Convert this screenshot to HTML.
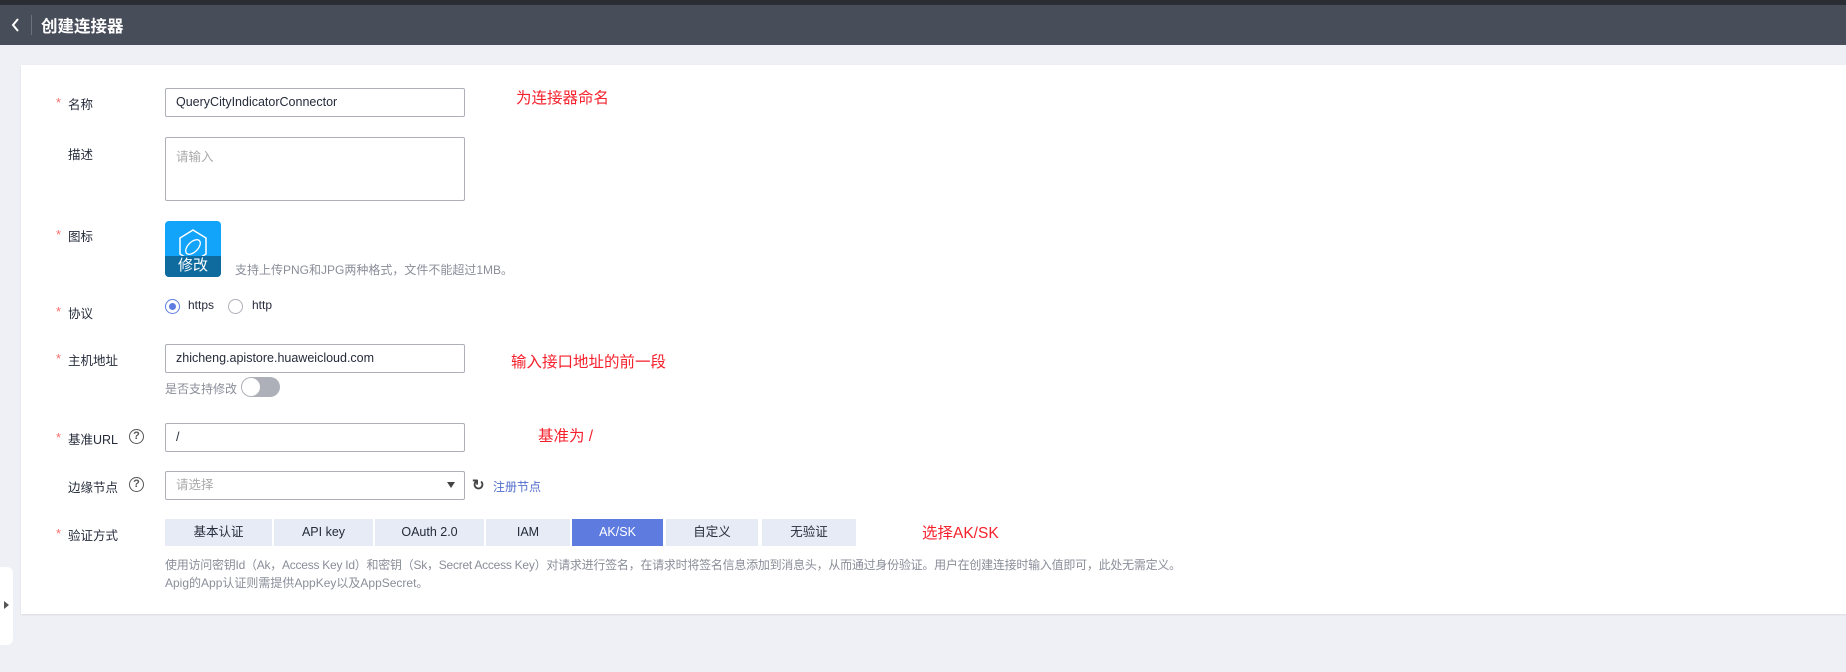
<!DOCTYPE html>
<html><head><meta charset="utf-8"><style>
*{box-sizing:border-box;margin:0;padding:0}
body{width:1846px;height:672px;background:#eef0f5;font-family:"Liberation Sans","Noto Sans CJK SC",sans-serif;font-size:12px;color:#252b3a;position:relative;overflow:hidden}
.abs{position:absolute}
.top{left:0;top:0;width:1846px;height:5px;background:#2a2d34}
.hdr{left:0;top:5px;width:1846px;height:40px;background:#484d5a}
.card{left:21px;top:65px;width:1830px;height:549px;background:#fff;box-shadow:0 1px 2px rgba(0,0,0,.08)}
.lab{left:68px;color:#252b3a;font-size:12.5px}
.star{left:56px;color:#f66f6a;font-size:13px}
.inp{left:165px;width:300px;border:1px solid #adb0b8;background:#fff;border-radius:2px;padding-left:10px;font-size:12.5px}
.red{color:#f5222d;font-size:15.5px}
.q{width:15px;height:15px;border:1.5px solid #555;border-radius:50%;font-size:11px;text-align:center;line-height:12px;color:#555;font-weight:bold}
.seg{top:519px;height:27px;background:#e6ebf5;text-align:center;line-height:27px;font-size:12.5px;color:#252b3a}
.gray{color:#8a8e99;font-size:12px}
</style></head><body>
<div class="abs top"></div>
<div class="abs hdr">
 <svg class="abs" style="left:10px;top:12px" width="12" height="16"><path d="M8 2 L3 8 L8 14" stroke="#fff" stroke-width="2" fill="none"/></svg>
 <div class="abs" style="left:31px;top:10px;width:1px;height:20px;background:#6c717d"></div>
 <div class="abs" style="left:41px;top:8px;color:#fff;font-size:16.5px;font-weight:bold">创建连接器</div>
</div>
<div class="abs" style="left:0;top:567px;width:13px;height:78px;background:#fff;border-radius:0 6px 6px 0"></div>
<div class="abs" style="left:4px;top:601px;width:0;height:0;border-left:5px solid #555;border-top:4px solid transparent;border-bottom:4px solid transparent"></div>
<div class="abs card"></div>

<div class="abs star" style="top:95px">*</div><div class="abs lab" style="top:94px">名称</div>
<div class="abs inp" style="top:88px;height:29px;line-height:27px">QueryCityIndicatorConnector</div>
<div class="abs red" style="left:516px;top:86px">为连接器命名</div>

<div class="abs lab" style="top:144px">描述</div>
<div class="abs inp" style="top:137px;height:64px;padding-top:8px;color:#aaa">请输入</div>

<div class="abs star" style="top:227px">*</div><div class="abs lab" style="top:226px">图标</div>
<div class="abs" style="left:165px;top:221px;width:56px;height:56px;border-radius:4px;background:#12a4fa;overflow:hidden">
 <svg class="abs" style="left:10px;top:6px" width="36" height="40"><path d="M18 3 L31 11 L31 27 L18 35 L5 27 L5 11 Z" fill="none" stroke="#fff" stroke-width="1.5"/><ellipse cx="18" cy="20" rx="9" ry="5" transform="rotate(-45 18 20)" fill="none" stroke="#fff" stroke-width="1.3"/></svg>
 <div class="abs" style="left:0;top:35px;width:56px;height:21px;background:#0f6a9e;color:#fff;text-align:center;font-size:15px;line-height:20px">修改</div>
</div>
<div class="abs gray" style="left:235px;top:261px">支持上传PNG和JPG两种格式，文件不能超过1MB。</div>

<div class="abs star" style="top:304px">*</div><div class="abs lab" style="top:303px">协议</div>
<div class="abs" style="left:165px;top:299px;width:15px;height:15px;border:1px solid #5e7ce0;border-radius:50%"><div class="abs" style="left:3px;top:3px;width:7px;height:7px;border-radius:50%;background:#5e7ce0"></div></div>
<div class="abs" style="left:188px;top:298px">https</div>
<div class="abs" style="left:228px;top:299px;width:15px;height:15px;border:1px solid #adb0b8;border-radius:50%"></div>
<div class="abs" style="left:252px;top:298px">http</div>

<div class="abs star" style="top:351px">*</div><div class="abs lab" style="top:350px">主机地址</div>
<div class="abs inp" style="top:344px;height:29px;line-height:27px">zhicheng.apistore.huaweicloud.com</div>
<div class="abs red" style="left:511px;top:350px">输入接口地址的前一段</div>
<div class="abs gray" style="left:165px;top:380px">是否支持修改</div>
<div class="abs" style="left:241px;top:377px;width:39px;height:20px;border-radius:10px;background:#adb0b8"><div class="abs" style="left:1px;top:1px;width:18px;height:18px;border-radius:50%;background:#fff"></div></div>

<div class="abs star" style="top:430px">*</div><div class="abs lab" style="top:429px">基准URL</div>
<div class="abs q" style="left:129px;top:429px">?</div>
<div class="abs inp" style="top:423px;height:29px;line-height:27px">/</div>
<div class="abs red" style="left:538px;top:424px">基准为 /</div>

<div class="abs lab" style="top:477px">边缘节点</div>
<div class="abs q" style="left:129px;top:477px">?</div>
<div class="abs inp" style="top:471px;height:29px;line-height:27px;color:#aaa">请选择</div>
<div class="abs" style="left:447px;top:482px;width:0;height:0;border-top:6px solid #444;border-left:4px solid transparent;border-right:4px solid transparent"></div>
<div class="abs" style="left:472px;top:476px;font-size:15px;color:#444;font-weight:bold">↻</div>
<div class="abs" style="left:493px;top:478px;color:#526ecc">注册节点</div>

<div class="abs star" style="top:526px">*</div><div class="abs lab" style="top:525px">验证方式</div>
<div class="abs seg" style="left:165px;width:107px">基本认证</div>
<div class="abs seg" style="left:274px;width:99px">API key</div>
<div class="abs seg" style="left:375px;width:109px">OAuth 2.0</div>
<div class="abs seg" style="left:486px;width:84px">IAM</div>
<div class="abs seg" style="left:572px;width:91px;background:#5e7ce0;color:#fff">AK/SK</div>
<div class="abs seg" style="left:666px;width:92px">自定义</div>
<div class="abs seg" style="left:762px;width:94px">无验证</div>
<div class="abs red" style="left:922px;top:521px">选择AK/SK</div>
<div class="abs gray" style="left:165px;top:556px;letter-spacing:-0.25px">使用访问密钥Id（Ak，Access Key Id）和密钥（Sk，Secret Access Key）对请求进行签名，在请求时将签名信息添加到消息头，从而通过身份验证。用户在创建连接时输入值即可，此处无需定义。</div>
<div class="abs gray" style="left:165px;top:574px">Apig的App认证则需提供AppKey以及AppSecret。</div>
</body></html>
